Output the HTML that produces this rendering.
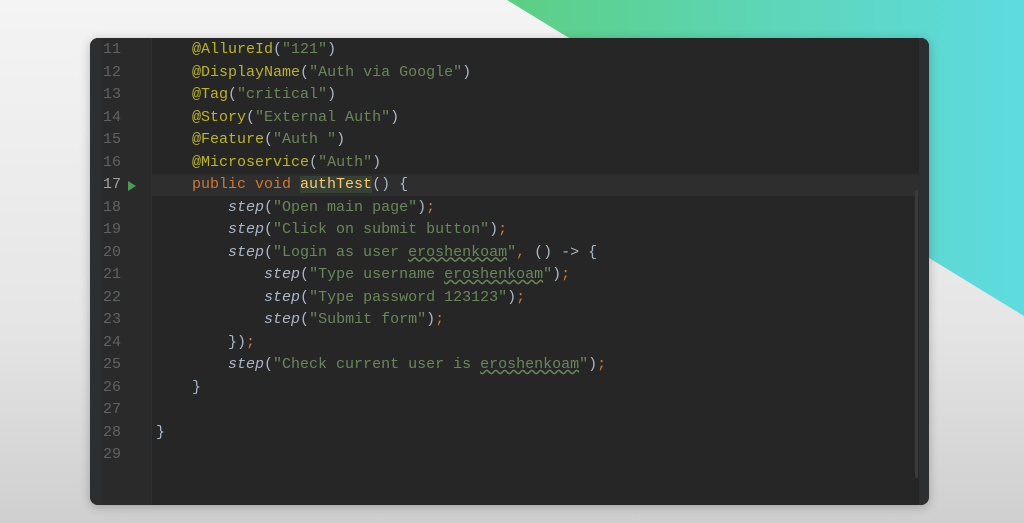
<!DOCTYPE html>
<html><head><style>
*{margin:0;padding:0;box-sizing:border-box}
body{width:1024px;height:523px;overflow:hidden;position:relative;background:linear-gradient(180deg,#f4f4f4 0%,#e6e6e6 60%,#cfcfcf 100%);font-family:"Liberation Mono",monospace}
.band{position:absolute;left:0;top:0;width:1024px;height:523px;background:linear-gradient(90deg,#5ccf84 0%,#5ccf84 50%,#5dd6b8 75%,#5ddbe0 100%);clip-path:polygon(507px 0,1024px 0,1024px 316px)}
.win{position:absolute;left:90px;top:38px;width:839px;height:467px;background:#262626;border-radius:8px;overflow:hidden;box-shadow:0 2px 10px rgba(0,0,0,.25)}
.strip{position:absolute;left:0;top:0;width:11px;height:100%;background:#2d2e30}
.gutter{position:absolute;left:11px;top:0;width:51px;height:100%;background:#2a2a2a;border-right:1px solid #303030}
.rstrip{position:absolute;right:0;top:0;width:10px;height:100%;background:#2d2e30}
.cur{position:absolute;left:0;top:136px;width:829px;height:22px;background:#2e2e2e}
.sb{position:absolute;left:825px;top:152px;width:3px;height:288px;background:#3a3a3a;border-radius:2px}
.ln{position:absolute;left:13px;top:1px;width:20px;color:#5f6265;font-size:15px;line-height:22.5px}
.code{position:absolute;left:66px;top:1px;font-size:15px;line-height:22.5px;color:#a9b7c6;white-space:pre}
.a{color:#bbb529}.s{color:#6a8759}.k{color:#cc7832}.i{font-style:italic}
.w{text-decoration:underline wavy #6a8759}
.run{position:absolute;left:38px;top:143px;width:0;height:0;border-left:8px solid #499c54;border-top:5px solid transparent;border-bottom:5px solid transparent}
</style></head><body>
<div class="band"></div>
<div class="win">
<div class="cur"></div>
<div class="strip"></div>
<div class="gutter"></div>
<div class="rstrip"></div>
<div class="sb"></div>
<div class="ln">11<br>12<br>13<br>14<br>15<br>16<br><span style="color:#a4a3a3">17</span><br>18<br>19<br>20<br>21<br>22<br>23<br>24<br>25<br>26<br>27<br>28<br>29</div>
<div class="run"></div>
<div class="code">    <span class="a">@AllureId</span>(<span class="s">"121"</span>)
    <span class="a">@DisplayName</span>(<span class="s">"Auth via Google"</span>)
    <span class="a">@Tag</span>(<span class="s">"critical"</span>)
    <span class="a">@Story</span>(<span class="s">"External Auth"</span>)
    <span class="a">@Feature</span>(<span class="s">"Auth "</span>)
    <span class="a">@Microservice</span>(<span class="s">"Auth"</span>)
    <span class="k">public void </span><span style="color:#ffc66d;background:#344134">authTest</span>() {
        <span class="i">step</span>(<span class="s">"Open main page"</span>)<span class="k">;</span>
        <span class="i">step</span>(<span class="s">"Click on submit button"</span>)<span class="k">;</span>
        <span class="i">step</span>(<span class="s">"Login as user <span class="w">eroshenkoam</span>"</span><span class="k">,</span> () -> {
            <span class="i">step</span>(<span class="s">"Type username <span class="w">eroshenkoam</span>"</span>)<span class="k">;</span>
            <span class="i">step</span>(<span class="s">"Type password 123123"</span>)<span class="k">;</span>
            <span class="i">step</span>(<span class="s">"Submit form"</span>)<span class="k">;</span>
        })<span class="k">;</span>
        <span class="i">step</span>(<span class="s">"Check current user is <span class="w">eroshenkoam</span>"</span>)<span class="k">;</span>
    }

}
</div>
</div>
</body></html>
